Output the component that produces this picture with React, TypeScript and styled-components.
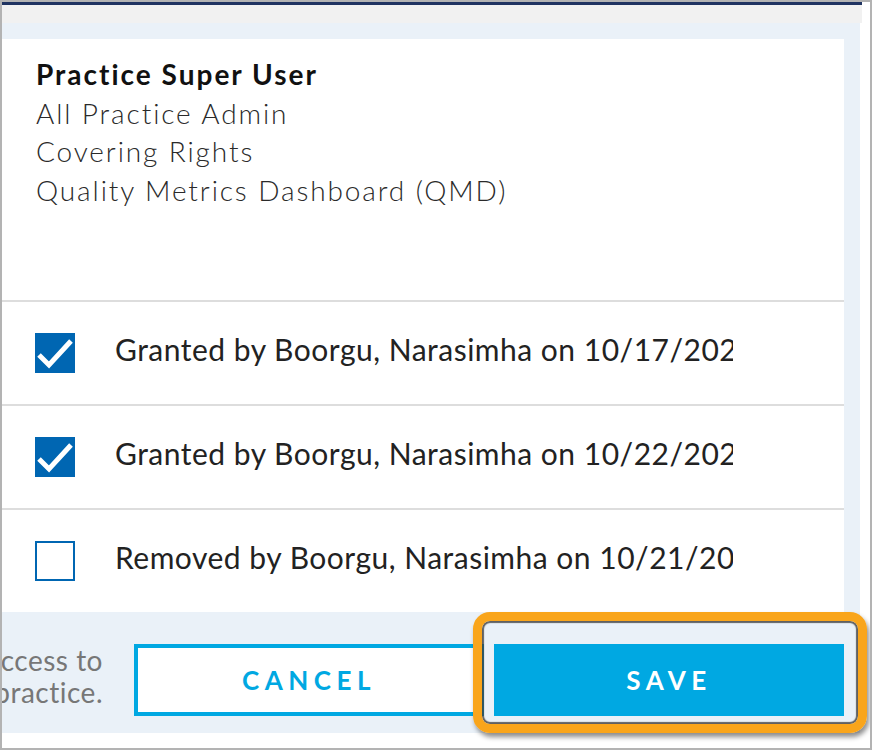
import React from 'react';
import styled, { createGlobalStyle } from 'styled-components';

const GlobalStyle = createGlobalStyle`
  html, body {
    margin: 0;
    padding: 0;
    background: #ffffff;
  }
  body {
    font-family: Lato, "Open Sans", "Liberation Sans", sans-serif;
  }
`;

// Outer window frame
const Frame = styled.div`
  position: relative;
  width: 872px;
  height: 750px;
  box-sizing: border-box;
  border: 2px solid #b3b3b3;
  background: #ffffff;
  overflow: hidden;
`;

const Column = styled.div`
  width: 858px;
  display: flex;
  flex-direction: column;
`;

const NavyBar = styled.div`
  height: 3px;
  width: 860px;
  background: #1f3361;
`;

const GrayBand = styled.div`
  height: 18px;
  width: 860px;
  background: #f1f1f1;
`;

const Panel = styled.div`
  background: #eaf1f8;
  padding: 16px 16px 0 0;
`;

const Card = styled.div`
  background: #ffffff;
  display: flex;
  flex-direction: column;
`;

const RoleHeader = styled.div`
  height: 261px;
  box-sizing: border-box;
  padding: 16px 34px 0;
  line-height: 38.5px;
`;

const RoleTitle = styled.div`
  font-size: 28px;
  font-weight: 700;
  letter-spacing: 2px;
  color: #111111;
`;

const RoleLine = styled.div`
  font-size: 28px;
  font-weight: 300;
  letter-spacing: 1.9px;
  color: #2a2a2a;
`;

const HistoryRow = styled.label`
  height: 104px;
  box-sizing: border-box;
  border-top: 2px solid #dddddd;
  display: flex;
  align-items: center;
  padding-left: 33px;
  gap: 40px;
`;

const Box = styled.span<{ checked: boolean }>`
  width: 40px;
  height: 40px;
  box-sizing: border-box;
  flex-shrink: 0;
  display: flex;
  align-items: center;
  justify-content: center;
  background: ${p => (p.checked ? '#0066b2' : '#ffffff')};
  border: 2px solid #0066b2;
`;

const RowText = styled.span`
  width: 618px;
  overflow: hidden;
  white-space: nowrap;
  font-size: 30px;
  letter-spacing: 0.5px;
  color: #222222;
  margin-bottom: 9px;
`;

const Footer = styled.div`
  position: relative;
  height: 121px;
  box-sizing: border-box;
  background: #eaf1f8;
  padding: 32px 16px 0 0;
  display: flex;
  align-items: flex-start;
`;

const Note = styled.div`
  width: 101px;
  flex-shrink: 0;
  overflow: hidden;
  display: flex;
  justify-content: flex-end;
  margin-right: 31px;
`;

const NoteText = styled.div`
  flex-shrink: 0;
  white-space: nowrap;
  text-align: right;
  font-size: 28px;
  line-height: 32px;
  letter-spacing: 0.5px;
  color: #777777;
`;

const Actions = styled.div`
  flex: 1;
  display: flex;
  gap: 10px;
`;

const Button = styled.button<{ primary?: boolean }>`
  flex: 1;
  height: 72px;
  box-sizing: border-box;
  border: 4px solid #00a8e2;
  background: ${p => (p.primary ? '#00a8e2' : '#ffffff')};
  color: ${p => (p.primary ? '#ffffff' : '#00a8e2')};
  font-family: Lato, "Liberation Sans", sans-serif;
  font-size: 26px;
  font-weight: 700;
  letter-spacing: 5.5px;
  padding: 0;
  cursor: pointer;
`;

// Orange callout drawn over the save button
const Highlight = styled.div`
  position: absolute;
  left: 471px;
  top: 0;
  width: 394px;
  height: 121px;
  box-sizing: border-box;
  border: 9px solid #f9a51b;
  border-radius: 17px;
  box-shadow: inset 0 0 1px 2px rgba(60, 60, 60, 0.8), 2px 4px 5px rgba(0, 0, 0, 0.45);
  pointer-events: none;
`;

const Check = () => (
  <svg width="36" height="36" viewBox="0 0 36 36">
    <polyline points="2,20 12,30 34,6" fill="none" stroke="#ffffff" strokeWidth="5" />
  </svg>
);

const history = [
  { checked: true, text: 'Granted by Boorgu, Narasimha on 10/17/2023' },
  { checked: true, text: 'Granted by Boorgu, Narasimha on 10/22/2023' },
  { checked: false, text: 'Removed by Boorgu, Narasimha on 10/21/2023' },
];

const App: React.FC = () => (
  <>
    <GlobalStyle />
    <Frame>
      <Column>
        <NavyBar />
        <GrayBand />
        <Panel>
          <Card>
            <RoleHeader>
              <RoleTitle>Practice Super User</RoleTitle>
              <RoleLine>All Practice Admin</RoleLine>
              <RoleLine>Covering Rights</RoleLine>
              <RoleLine>Quality Metrics Dashboard (QMD)</RoleLine>
            </RoleHeader>
            {history.map(item => (
              <HistoryRow key={item.text}>
                <Box checked={item.checked}>{item.checked && <Check />}</Box>
                <RowText>{item.text}</RowText>
              </HistoryRow>
            ))}
          </Card>
        </Panel>
        <Footer>
          <Note>
            <NoteText>
              Users will have access to
              <br />
              this practice.
            </NoteText>
          </Note>
          <Actions>
            <Button>CANCEL</Button>
            <Button primary>SAVE</Button>
          </Actions>
          <Highlight />
        </Footer>
      </Column>
    </Frame>
  </>
);

export default App;
